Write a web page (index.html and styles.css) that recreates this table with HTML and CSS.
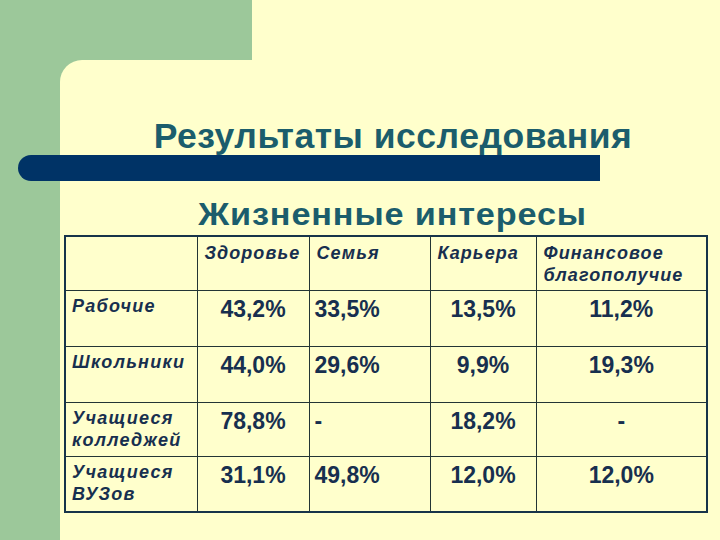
FILE: index.html
```html
<!DOCTYPE html>
<html lang="ru">
<head>
<meta charset="utf-8">
<title>Результаты исследования</title>
<link rel="stylesheet" href="styles.css">
</head>
<body>
<div class="slide">
  <div class="top">
    <div class="top-green"></div>
    <div class="top-cream"></div>
  </div>
  <div class="main">
    <div class="strip"></div>
    <div class="panel">
      <h1 class="title">Результаты исследования</h1>
      <h2 class="subtitle"><span class="subtitle-text">Жизненные интересы</span></h2>
      <table class="data">
        <colgroup>
          <col class="c0"><col class="c1"><col class="c2"><col class="c3"><col class="c4">
        </colgroup>
        <tr class="r-head">
          <th></th>
          <th>Здоровье</th>
          <th>Семья</th>
          <th>Карьера</th>
          <th>Финансовое благополучие</th>
        </tr>
        <tr class="r-body">
          <td class="lbl">Рабочие</td>
          <td class="num">43,2%</td>
          <td class="num left">33,5%</td>
          <td class="num">13,5%</td>
          <td class="num">11,2%</td>
        </tr>
        <tr class="r-body">
          <td class="lbl">Школьники</td>
          <td class="num">44,0%</td>
          <td class="num left">29,6%</td>
          <td class="num">9,9%</td>
          <td class="num">19,3%</td>
        </tr>
        <tr class="r-body r-short">
          <td class="lbl">Учащиеся колледжей</td>
          <td class="num">78,8%</td>
          <td class="num left">-</td>
          <td class="num">18,2%</td>
          <td class="num">-</td>
        </tr>
        <tr class="r-body">
          <td class="lbl">Учащиеся ВУЗов</td>
          <td class="num">31,1%</td>
          <td class="num left">49,8%</td>
          <td class="num">12,0%</td>
          <td class="num">12,0%</td>
        </tr>
      </table>
    </div>
  </div>
  <div class="bar"></div>
</div>
</body>
</html>
```
FILE: styles.css
```css
html, body {
  margin: 0;
  padding: 0;
}
body {
  width: 720px;
  height: 540px;
  overflow: hidden;
  font-family: "Liberation Sans", Arial, sans-serif;
}
.slide {
  position: relative;
  width: 720px;
  height: 540px;
  background: #9cc89a;
  display: flex;
  flex-direction: column;
}
.top {
  display: flex;
  height: 60px;
}
.top-green {
  width: 252px;
}
.top-cream {
  flex: 1;
  background: #ffffcc;
}
.main {
  flex: 1;
  display: flex;
}
.strip {
  width: 60px;
}
.panel {
  flex: 1;
  background: #ffffcc;
  border-top-left-radius: 22px;
  display: flex;
  flex-direction: column;
  align-items: center;
  padding-top: 56px;
}
.bar {
  position: absolute;
  left: 18px;
  top: 155px;
  width: 582px;
  height: 26px;
  background: #003366;
  border-radius: 13px 0 0 13px;
}
.title {
  margin: 0;
  font-size: 35.5px;
  line-height: 40px;
  font-weight: bold;
  color: #1b5d6c;
  letter-spacing: 0.5px;
  margin-left: 6px;
}
.subtitle {
  margin: 40px 0 0 0;
  font-size: 32px;
  line-height: 36px;
  font-weight: bold;
  color: #1b5d6c;
  margin-left: 6px;
}
.subtitle-text {
  display: inline-block;
  letter-spacing: 0.8px;
  transform: scaleX(1.07);
}
.data {
  margin-top: 3px;
  align-self: flex-start;
  margin-left: 4px;
  width: 642px;
  table-layout: fixed;
  border-collapse: collapse;
  border: 2px solid #17344a;
  color: #172f4f;
}
.c0 { width: 132px; }
.c1 { width: 112px; }
.c2 { width: 121px; }
.c3 { width: 106px; }
.c4 { width: 171px; }
.data th, .data td {
  border: 1px solid #233535;
  vertical-align: top;
  padding: 0;
}
.data th {
  font-size: 18px;
  line-height: 22px;
  font-style: italic;
  font-weight: bold;
  letter-spacing: 1.1px;
  text-align: left;
  padding: 5px 2px 0 7px;
}
.r-head { height: 54px; }
.r-body { height: 56px; }
.r-short { height: 54px; }
.lbl {
  font-size: 18px;
  line-height: 22px;
  font-style: italic;
  font-weight: bold;
  letter-spacing: 1.3px;
  padding: 4px 0 0 6px !important;
}
.num {
  font-size: 23px;
  line-height: 26px;
  font-weight: bold;
  text-align: center;
  padding-top: 5px !important;
}
.num.left {
  text-align: left;
  padding-left: 5px !important;
}
```
